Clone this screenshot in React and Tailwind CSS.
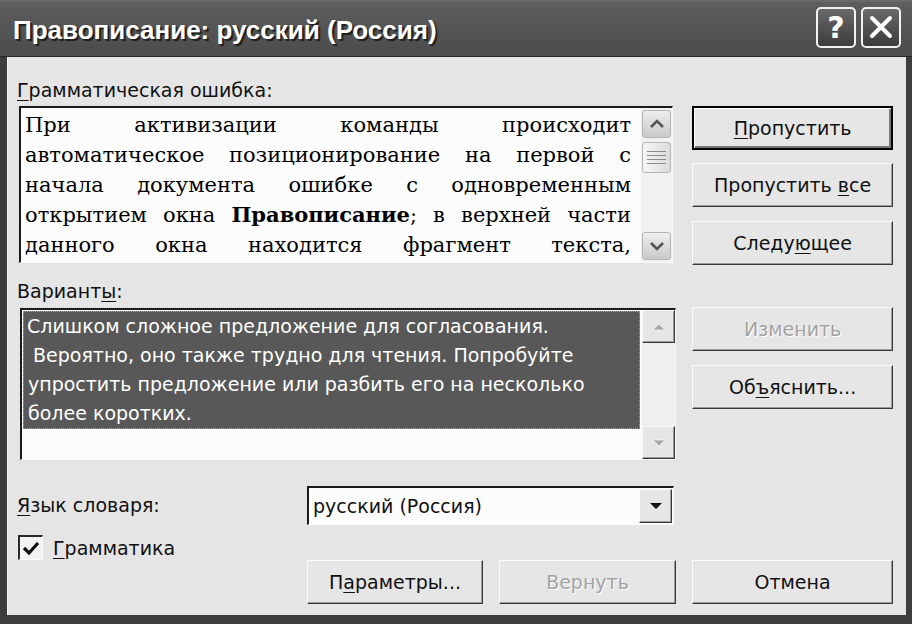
import React from "react";

const UI = { fontFamily: '"DejaVu Sans", "Noto Sans", sans-serif' };
const SERIF = { fontFamily: '"DejaVu Serif", "Liberation Serif", serif' };
const TITLE = { fontFamily: '"Liberation Sans", "DejaVu Sans", sans-serif' };

function U({ children }) {
  return <span className="underline underline-offset-[3px] decoration-1">{children}</span>;
}

function Btn({ children, def = false, disabled = false, className = "" }) {
  return (
    <div
      className={
        "h-[44px] flex items-center justify-center bg-[#e6e6e6] text-[19px] " +
        (def
          ? "border-2 border-black shadow-[inset_1px_1px_0_#ffffff,inset_-2px_-2px_0_#7a7a7a] "
          : "border border-t-[#fafafa] border-l-[#fafafa] border-r-[#3a3a3a] border-b-[#3a3a3a] shadow-[inset_-1px_-1px_0_#9a9a9a] ") +
        (disabled ? "text-[#a3a3a3] [text-shadow:1px_1px_0_#ffffff] " : "text-[#111111] ") +
        className
      }
      style={UI}
    >
      <span>{children}</span>
    </div>
  );
}

function XpScrollBtn({ up }) {
  return (
    <div className="h-[28px] w-[29px] mx-auto rounded-[3px] border border-[#b4b4b4] bg-gradient-to-b from-[#eeeeee] to-[#c9c9c9] flex items-center justify-center">
      <svg width="16" height="12" viewBox="0 0 16 12">
        <path
          d={up ? "M2 9 L8 3 L14 9" : "M2 3 L8 9 L14 3"}
          fill="none"
          stroke="#555555"
          strokeWidth="2.6"
        />
      </svg>
    </div>
  );
}

function ClassicScrollBtn({ up }) {
  return (
    <div className="h-[33px] w-full bg-[#e6e6e6] border border-t-[#fafafa] border-l-[#fafafa] border-r-[#3a3a3a] border-b-[#3a3a3a] shadow-[inset_-1px_-1px_0_#9a9a9a] flex items-center justify-center">
      <svg width="14" height="8" viewBox="0 0 14 8">
        <path
          d={up ? "M1 7 L7 1 L13 7 Z" : "M1 1 L7 7 L13 1 Z"}
          fill="#a8a8a8"
          stroke="#ffffff"
          strokeWidth="0.6"
        />
      </svg>
    </div>
  );
}

export default function App() {
  const lines = [
    <>При активизации команды происходит</>,
    <>автоматическое позиционирование на первой с</>,
    <>начала документа ошибке с одновременным</>,
    <>
      открытием окна <b>Правописание</b>; в верхней части
    </>,
    <>данного окна находится фрагмент текста,</>,
  ];
  return (
    <div className="w-[912px] h-[624px] bg-[#3d3d3d] flex flex-col overflow-hidden">
      {/* Title bar */}
      <div className="h-[57px] shrink-0 flex items-center justify-between pl-[13px] pr-[11px] bg-gradient-to-b from-[#5e5e5e] via-[#545454] to-[#4c4c4c] border-t-2 border-[#6a6a6a] border-b border-b-[#262626]">
        <div
          className="text-white text-[26px] font-bold [text-shadow:2px_2px_1px_#1e1e1e] mt-[2px]"
          style={TITLE}
        >
          Правописание: русский (Россия)
        </div>
        <div className="flex gap-[5px] mt-[-4px]">
          <div className="w-[40px] h-[41px] rounded-[5px] border-2 border-[#f2f2f2] bg-gradient-to-b from-[#6a6a6a] to-[#3c3c3c] flex items-center justify-center text-white text-[30px] font-bold" style={UI}>
            ?
          </div>
          <div className="w-[40px] h-[41px] rounded-[5px] border-2 border-[#f2f2f2] bg-gradient-to-b from-[#6a6a6a] to-[#3c3c3c] flex items-center justify-center">
            <svg width="26" height="26" viewBox="0 0 26 26">
              <path d="M4 4 L22 22 M22 4 L4 22" stroke="#ffffff" strokeWidth="4" strokeLinecap="round" />
            </svg>
          </div>
        </div>
      </div>

      {/* Body */}
      <div className="flex-1 ml-[7px] mr-[6px] mb-[9px] bg-[#e5e5e5] border-l border-l-[#f5f5f5] pl-[9px] pr-[13px] pt-[22px] flex flex-col text-[#111111]" style={UI}>
        <div className="flex gap-[16px]">
          {/* Left column */}
          <div className="w-[660px] flex flex-col">
            <div className="h-[22px] leading-[22px] text-[19px]">
              <U>Г</U>рамматическая ошибка:
            </div>
            <div className="mt-[5px] ml-[2px] w-[654px] h-[157px] border-t-2 border-l-2 border-t-[#1a1a1a] border-l-[#1a1a1a] border-b border-r border-b-[#fafafa] border-r-[#fafafa] bg-[#fcfcfc] flex">
              <div className="flex-1 pl-[4px] pr-[10px] pt-[2px] text-[21px] leading-[30px] text-black" style={SERIF}>
                {lines.map((l, i) => (
                  <div key={i} className="text-justify [text-align-last:justify] whitespace-nowrap">
                    {l}
                  </div>
                ))}
              </div>
              <div className="w-[31px] bg-[#f1f1f1] py-[2px] flex flex-col">
                <XpScrollBtn up />
                <div className="mt-[4px] h-[31px] w-[29px] mx-auto rounded-[3px] border border-[#b4b4b4] bg-gradient-to-r from-[#f6f6f6] to-[#dcdcdc] flex flex-col items-center justify-center gap-[3px]">
                  <div className="w-[19px] h-[1px] bg-[#8a8a8a]" />
                  <div className="w-[19px] h-[1px] bg-[#8a8a8a]" />
                  <div className="w-[19px] h-[1px] bg-[#8a8a8a]" />
                  <div className="w-[19px] h-[1px] bg-[#8a8a8a]" />
                </div>
                <div className="flex-1" />
                <XpScrollBtn />
              </div>
            </div>

            <div className="mt-[17px] h-[22px] leading-[22px] text-[19px]">
              Вариант<U>ы</U>:
            </div>
            <div className="mt-[6px] ml-[3px] w-[656px] h-[152px] border-t-2 border-l-2 border-t-[#1a1a1a] border-l-[#1a1a1a] border-b border-r border-b-[#fafafa] border-r-[#fafafa] bg-[#fbfbfb] flex">
              <div className="flex-1 pt-[1px] pl-[1px] pr-[2px]">
                <div className="h-[118px] bg-[#585858] border border-dotted border-[#a0a0a0] text-white text-[19px] leading-[29px] pl-[3px]">
                  <div>Слишком сложное предложение для согласования.</div>
                  <div className="pl-[6px]">Вероятно, оно также трудно для чтения. Попробуйте</div>
                  <div className="pl-[1px]">упростить предложение или разбить его на несколько</div>
                  <div className="pl-[1px]">более коротких.</div>
                </div>
              </div>
              <div className="w-[33px] bg-[#efefef] flex flex-col">
                <ClassicScrollBtn up />
                <div className="flex-1" />
                <ClassicScrollBtn />
              </div>
            </div>
          </div>

          {/* Right column */}
          <div className="w-[201px] flex flex-col pt-[27px]">
            <Btn def>
              <U>П</U>ропустить
            </Btn>
            <Btn className="mt-[13px]">
              Пропустить <U>в</U>се
            </Btn>
            <Btn className="mt-[14px]">
              Следу<U>ю</U>щее
            </Btn>
            <Btn disabled className="mt-[42px]">
              Изменить
            </Btn>
            <Btn className="mt-[14px]">
              Об<U>ъ</U>яснить...
            </Btn>
          </div>
        </div>

        {/* Bottom section */}
        <div className="mt-[26px] grid grid-cols-[274px_176px_177px_201px] gap-x-[16px] grid-rows-[39px_35px_43px]">
          <div className="flex items-center text-[19px]">
            <span>
              <U>Я</U>зык словаря:
            </span>
          </div>
          <div className="col-span-2 w-[367px] h-[39px] border-t-2 border-l-2 border-t-[#1a1a1a] border-l-[#1a1a1a] border-b border-r border-b-[#fafafa] border-r-[#fafafa] bg-[#fcfcfc] flex items-center justify-between pl-[4px] pr-[1px]">
            <div className="text-[19px]">русский (Россия)</div>
            <div className="w-[33px] h-[34px] bg-[#e6e6e6] border border-t-[#fafafa] border-l-[#fafafa] border-r-[#3a3a3a] border-b-[#3a3a3a] shadow-[inset_-1px_-1px_0_#9a9a9a] flex items-center justify-center">
              <svg width="14" height="8" viewBox="0 0 14 8">
                <path d="M1 1 L7 7 L13 1 Z" fill="#111111" />
              </svg>
            </div>
          </div>
          <div />

          <div className="col-span-4 flex items-end gap-[10px] ml-[1px]">
            <div className="w-[25px] h-[25px] border-t-2 border-l-2 border-t-[#2a2a2a] border-l-[#2a2a2a] border-b border-r border-b-[#fafafa] border-r-[#fafafa] bg-[#f3f3f3] flex items-center justify-center">
              <svg width="18" height="16" viewBox="0 0 18 16">
                <path d="M2 8 L7 13 L16 3" fill="none" stroke="#111111" strokeWidth="3.2" />
              </svg>
            </div>
            <div className="text-[19px] leading-[24px]">
              <U>Г</U>рамматика
            </div>
          </div>

          <div />
          <Btn className="h-[43px]">
            П<U>а</U>раметры...
          </Btn>
          <Btn disabled className="h-[43px]">
            Вернуть
          </Btn>
          <Btn className="h-[43px]">Отмена</Btn>
        </div>
      </div>
    </div>
  );
}
